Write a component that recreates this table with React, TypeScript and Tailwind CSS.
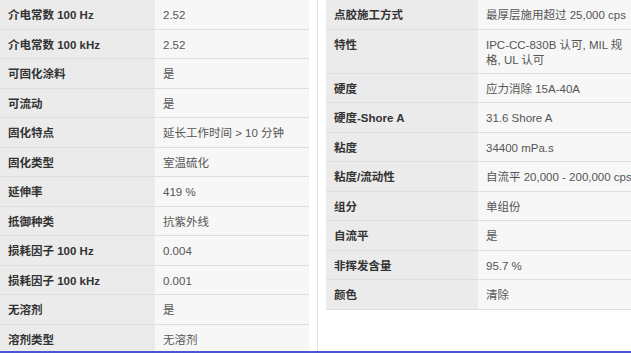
const left: [string, string][] = [
  ['介电常数 100 Hz', '2.52'],
  ['介电常数 100 kHz', '2.52'],
  ['可固化涂料', '是'],
  ['可流动', '是'],
  ['固化特点', '延长工作时间 > 10 分钟'],
  ['固化类型', '室温硫化'],
  ['延伸率', '419 %'],
  ['抵御种类', '抗紫外线'],
  ['损耗因子 100 Hz', '0.004'],
  ['损耗因子 100 kHz', '0.001'],
  ['无溶剂', '是'],
  ['溶剂类型', '无溶剂'],
]

const right: [string, string][] = [
  ['点胶施工方式', '最厚层施用超过 25,000 cps'],
  ['特性', 'IPC-CC-830B 认可, MIL 规\n格, UL 认可'],
  ['硬度', '应力消除 15A-40A'],
  ['硬度-Shore A', '31.6 Shore A'],
  ['粘度', '34400 mPa.s'],
  ['粘度/流动性', '自流平 20,000 - 200,000 cps'],
  ['组分', '单组份'],
  ['自流平', '是'],
  ['非挥发含量', '95.7 %'],
  ['颜色', '清除'],
]

function Table({ rows, labelW }: { rows: [string, string][]; labelW: string }) {
  return (
    <div className="flex flex-col">
      {rows.map(([k, v]) => (
        <div key={k} className="flex border-b border-[#dedede] min-h-[29.5px]">
          <div className={`${labelW} shrink-0 bg-[#ebebeb] pl-2 pr-2 pt-[8px] pb-[5px] font-bold text-[#333] leading-[15px]`}>
            {k}
          </div>
          <div className="flex-1 bg-[#f7f7f7] pl-2 pr-1 pt-[8px] pb-[5px] text-[#555] leading-[15px] whitespace-pre">
            {v}
          </div>
        </div>
      ))}
    </div>
  )
}

export default function App() {
  return (
    <div
      className="w-[631px] h-[353px] flex flex-col bg-white overflow-hidden text-[11.5px]"
      style={{ fontFamily: '"Liberation Sans", Arial, "Noto Sans CJK SC", sans-serif' }}
    >
      <div className="flex flex-1 min-h-0 overflow-hidden">
        <div className="w-[309px] shrink-0">
          <Table rows={left} labelW="w-[155px]" />
        </div>
        <div className="w-[8px] shrink-0" />
        <div className="w-px shrink-0 bg-[#e2e2e2]" />
        <div className="w-[8px] shrink-0" />
        <div className="w-[330px] shrink-0">
          <Table rows={right} labelW="w-[152px]" />
        </div>
      </div>
      <div className="h-[2px] bg-[#4b55d6]" />
    </div>
  )
}
